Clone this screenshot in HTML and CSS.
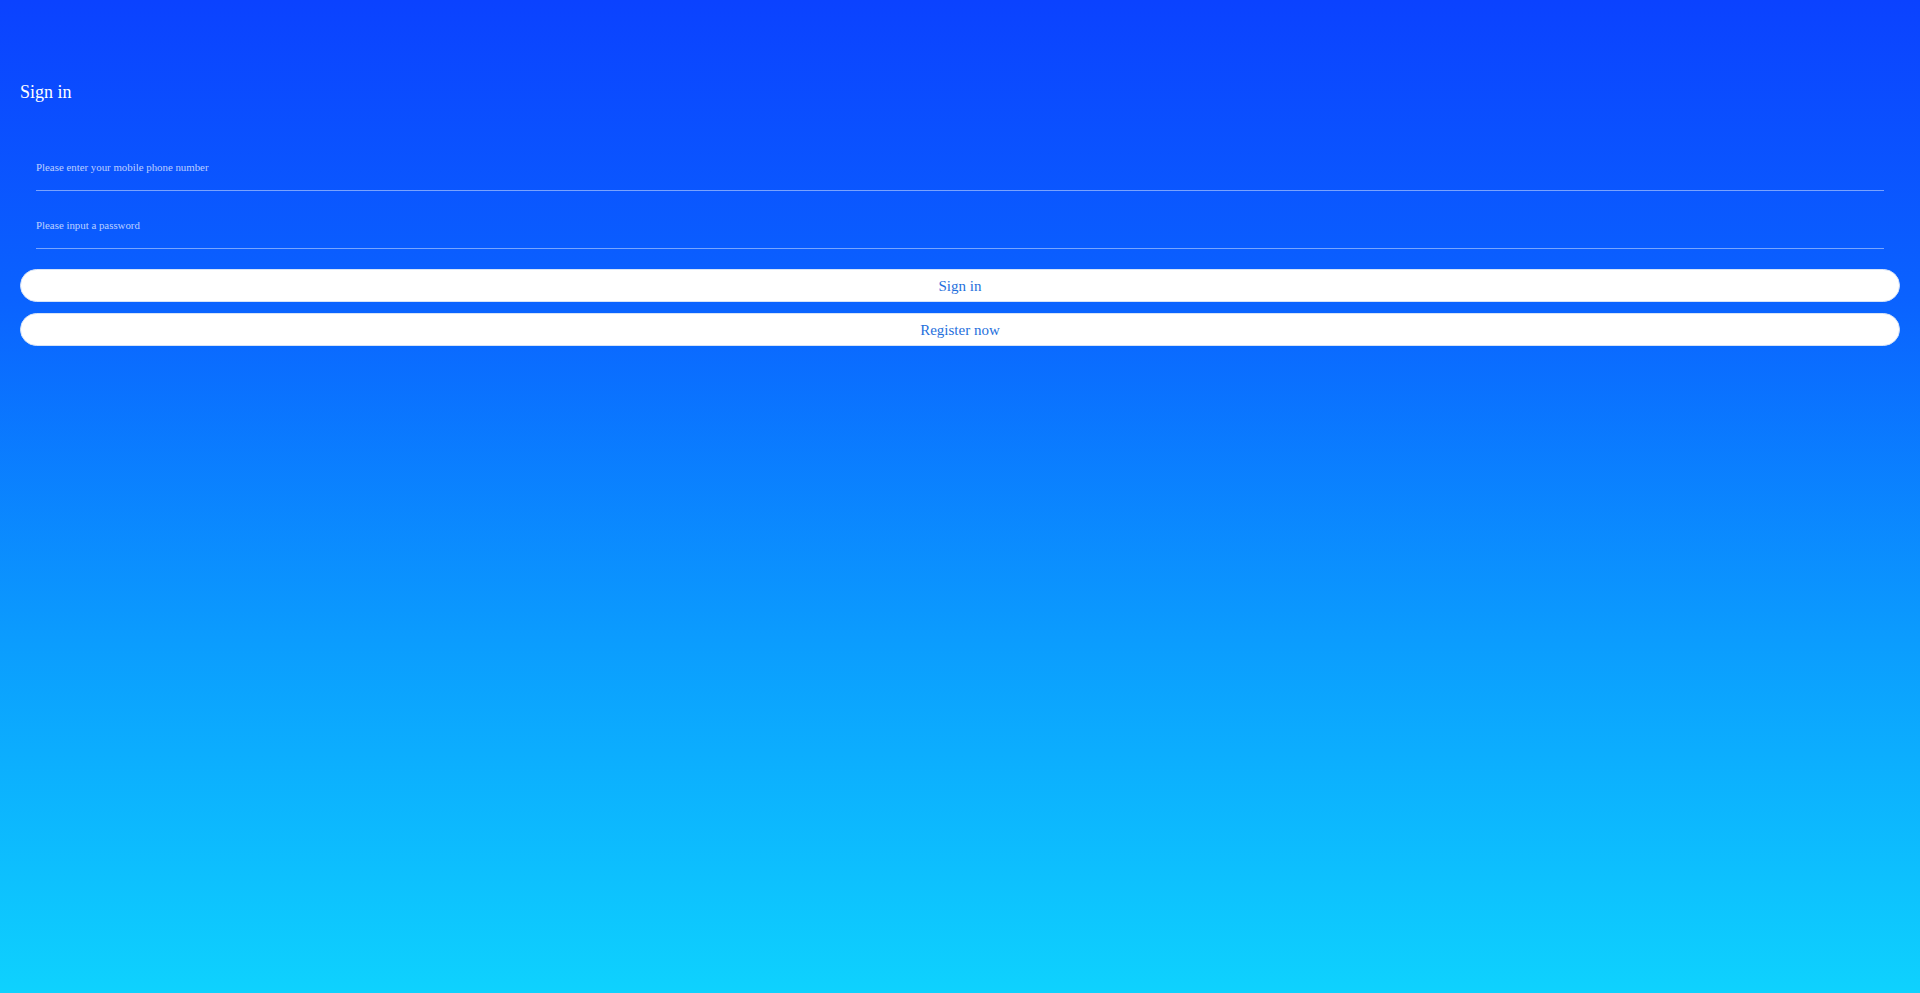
FILE: index.html
```html
<!DOCTYPE html>
<html lang="en">
<head>
<meta charset="utf-8">
<title>Sign in</title>
<link rel="stylesheet" href="styles.css">
</head>
<body>
<div class="page">
  <div class="title">Sign in</div>
  <form class="form">
    <div class="field"><input class="input" type="tel" placeholder="Please enter your mobile phone number"></div>
    <div class="field"><input class="input" type="password" placeholder="Please input a password"></div>
    <div class="actions">
      <button type="button" class="btn">Sign in</button>
      <button type="button" class="btn">Register now</button>
    </div>
  </form>
</div>
</body>
</html>
```
FILE: styles.css
```css
html, body {
  margin: 0;
  padding: 0;
}
body {
  font-family: "Liberation Serif", "Times New Roman", serif;
}
.page {
  box-sizing: border-box;
  min-height: 100vh;
  padding: 82px 20px 0;
  background: linear-gradient(180deg, #0b42ff 0%, #0a62ff 30%, #0b9dfe 65%, #0ed2fe 100%);
}
.title {
  color: #ffffff;
  font-size: 18px;
  line-height: 20px;
  height: 20px;
}
.form {
  margin-top: 44px;
  display: flex;
  flex-direction: column;
}
.field {
  padding: 0 16px 0 16px;
  margin-bottom: 13px;
}
.field + .field {
  margin-bottom: 0;
}
.input {
  display: block;
  box-sizing: border-box;
  width: 100%;
  height: 45px;
  padding: 0 0 2px 0;
  margin: 0;
  border: none;
  border-bottom: 1px solid rgba(255, 255, 255, 0.45);
  background: transparent;
  outline: none;
  color: #ffffff;
  font-family: "Liberation Serif", "Times New Roman", serif;
  font-size: 10.85px;
}
.input::placeholder {
  color: rgba(255, 255, 255, 0.72);
}
.actions {
  margin-top: 20px;
  display: flex;
  flex-direction: column;
  gap: 11px;
}
.btn {
  display: block;
  box-sizing: border-box;
  width: 100%;
  height: 33px;
  margin: 0;
  padding: 1px 0 0 0;
  border: 1px solid #d6e3f7;
  border-radius: 17px;
  background: #ffffff;
  color: #1f6fdc;
  font-family: "Liberation Serif", "Times New Roman", serif;
  font-size: 15px;
  cursor: pointer;
}
```
